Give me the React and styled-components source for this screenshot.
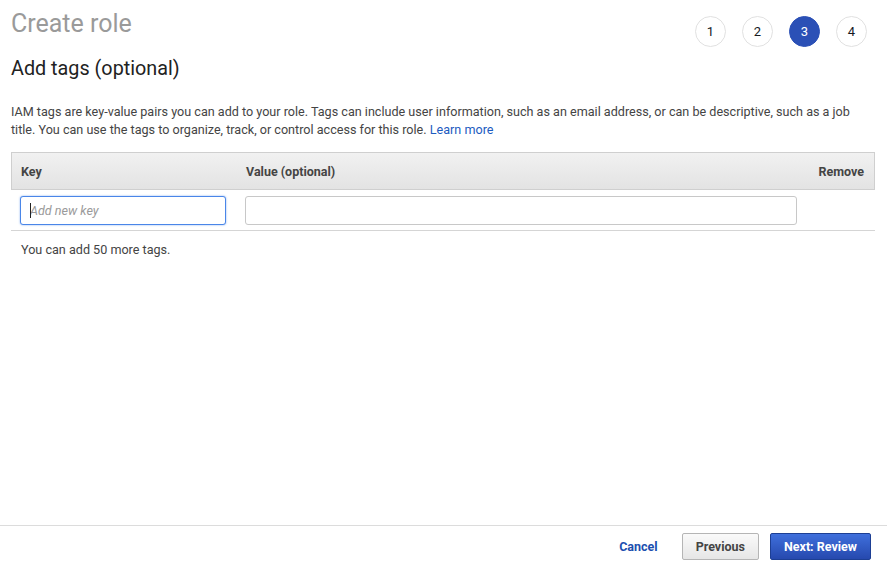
import React from "react";
import styled, { createGlobalStyle } from "styled-components";

const GlobalStyle = createGlobalStyle`
  html, body {
    margin: 0;
    padding: 0;
    height: 100%;
    background: #fff;
  }
  body {
    font-family: Roboto, "Liberation Sans", Arial, sans-serif;
    color: #444;
  }
  #root {
    height: 100%;
  }
`;

const Page = styled.div`
  height: 100vh;
  display: flex;
  flex-direction: column;
  box-sizing: border-box;
`;

const Main = styled.div`
  flex: 1;
  padding: 0 12px 0 11px;
`;

const TopBar = styled.div`
  display: flex;
  justify-content: space-between;
  align-items: flex-start;
`;

const Title = styled.h1`
  margin: 8px 0 0;
  font-size: 25px;
  font-weight: 400;
  color: #9a9a9a;
  line-height: 32px;
`;

const Steps = styled.div`
  display: flex;
  gap: 16px;
  margin-top: 16px;
  margin-right: 8px;
`;

const Step = styled.div`
  width: 31px;
  height: 31px;
  border-radius: 50%;
  box-sizing: border-box;
  border: 1px solid ${(p) => (p.active ? "#2b50b6" : "#e1e1e1")};
  background: ${(p) => (p.active ? "#2b50b6" : "#fff")};
  color: ${(p) => (p.active ? "#fff" : "#16191f")};
  font-size: 13px;
  display: flex;
  align-items: center;
  justify-content: center;
`;

const SubTitle = styled.h2`
  margin: 9px 0 0;
  font-size: 19.8px;
  font-weight: 400;
  color: #222;
  line-height: 26px;
`;

const Intro = styled.p`
  margin: 21px 0 0;
  font-size: 12.6px;
  line-height: 18px;
  color: #444;
  padding-right: 10px;
`;

const Link = styled.a`
  color: #1c5bbf;
  text-decoration: none;
`;

const Table = styled.div`
  margin-top: 13px;
`;

const Row = styled.div`
  display: grid;
  grid-template-columns: 224px 1fr 68px;
  align-items: center;
`;

const HeadRow = styled(Row)`
  height: 38px;
  box-sizing: border-box;
  border: 1px solid #cfcfcf;
  background: linear-gradient(#f1f1f1, #e3e3e3);
`;

const HeadCell = styled.div`
  font-size: 12.5px;
  font-weight: 700;
  color: #444;
  padding: ${(p) => (p.first ? "0 0 0 9px" : "0 10px")};
  text-align: ${(p) => (p.right ? "right" : "left")};
`;

const BodyRow = styled(Row)`
  height: 41px;
  box-sizing: border-box;
  border-bottom: 1px solid #d5d5d5;
`;

const Cell = styled.div`
  padding: ${(p) => (p.first ? "0 9px 0 9px" : "0 10px")};
`;

const TextField = styled.input`
  display: block;
  width: 100%;
  height: 29px;
  box-sizing: border-box;
  border: 1px solid ${(p) => (p.focused ? "#4a86e8" : "#c8c8c8")};
  border-radius: 3px;
  box-shadow: ${(p) => (p.focused ? "0 0 2px rgba(74,134,232,0.7)" : "none")};
  padding: 0 9px;
  font-family: Roboto, "Liberation Sans", Arial, sans-serif;
  font-size: 12.6px;
  color: #444;
  outline: none;

  &::placeholder {
    font-style: italic;
    color: #9a9a9a;
  }
`;

const FieldWrap = styled.div`
  position: relative;
`;

const Caret = styled.span`
  position: absolute;
  left: 10px;
  top: 7px;
  width: 1px;
  height: 15px;
  background: #222;
`;

const Note = styled.div`
  margin: 10px 0 0 10px;
  font-size: 12.6px;
  color: #444;
  line-height: 17px;
`;

const Footer = styled.div`
  border-top: 1px solid #dcdcdc;
  height: 36px;
  display: flex;
  justify-content: flex-end;
  align-items: flex-start;
  padding: 7px 16px 0 0;
  box-sizing: border-box;
  gap: 11px;
`;

const CancelLink = styled.a`
  font-size: 12.5px;
  font-weight: 700;
  color: #1c4fb0;
  margin-right: 13px;
  line-height: 27px;
  cursor: pointer;
`;

const Button = styled.button`
  height: 27px;
  box-sizing: border-box;
  padding: 0 13px;
  border-radius: 2px;
  font-family: Roboto, "Liberation Sans", Arial, sans-serif;
  font-size: 12.5px;
  font-weight: 700;
  cursor: pointer;
  border: 1px solid ${(p) => (p.primary ? "#1d3f94" : "#b5b5b5")};
  color: ${(p) => (p.primary ? "#fff" : "#444")};
  background: ${(p) =>
    p.primary
      ? "linear-gradient(#3f6fdc, #2649ae)"
      : "linear-gradient(#fafafa, #e6e6e6)"};
`;

export default function App() {
  return (
    <Page>
      <GlobalStyle />
      <Main>
        <TopBar>
          <Title>Create role</Title>
          <Steps>
            <Step>1</Step>
            <Step>2</Step>
            <Step active>3</Step>
            <Step>4</Step>
          </Steps>
        </TopBar>
        <SubTitle>Add tags (optional)</SubTitle>
        <Intro>
          IAM tags are key-value pairs you can add to your role. Tags can
          include user information, such as an email address, or can be
          descriptive, such as a job title. You can use the tags to organize,
          track, or control access for this role. <Link href="#">Learn more</Link>
        </Intro>
        <Table>
          <HeadRow>
            <HeadCell first>Key</HeadCell>
            <HeadCell>Value (optional)</HeadCell>
            <HeadCell right>Remove</HeadCell>
          </HeadRow>
          <BodyRow>
            <Cell first>
              <FieldWrap>
                <TextField focused placeholder="Add new key" />
                <Caret />
              </FieldWrap>
            </Cell>
            <Cell>
              <TextField />
            </Cell>
            <Cell />
          </BodyRow>
        </Table>
        <Note>You can add 50 more tags.</Note>
      </Main>
      <Footer>
        <CancelLink>Cancel</CancelLink>
        <Button>Previous</Button>
        <Button primary>Next: Review</Button>
      </Footer>
    </Page>
  );
}
